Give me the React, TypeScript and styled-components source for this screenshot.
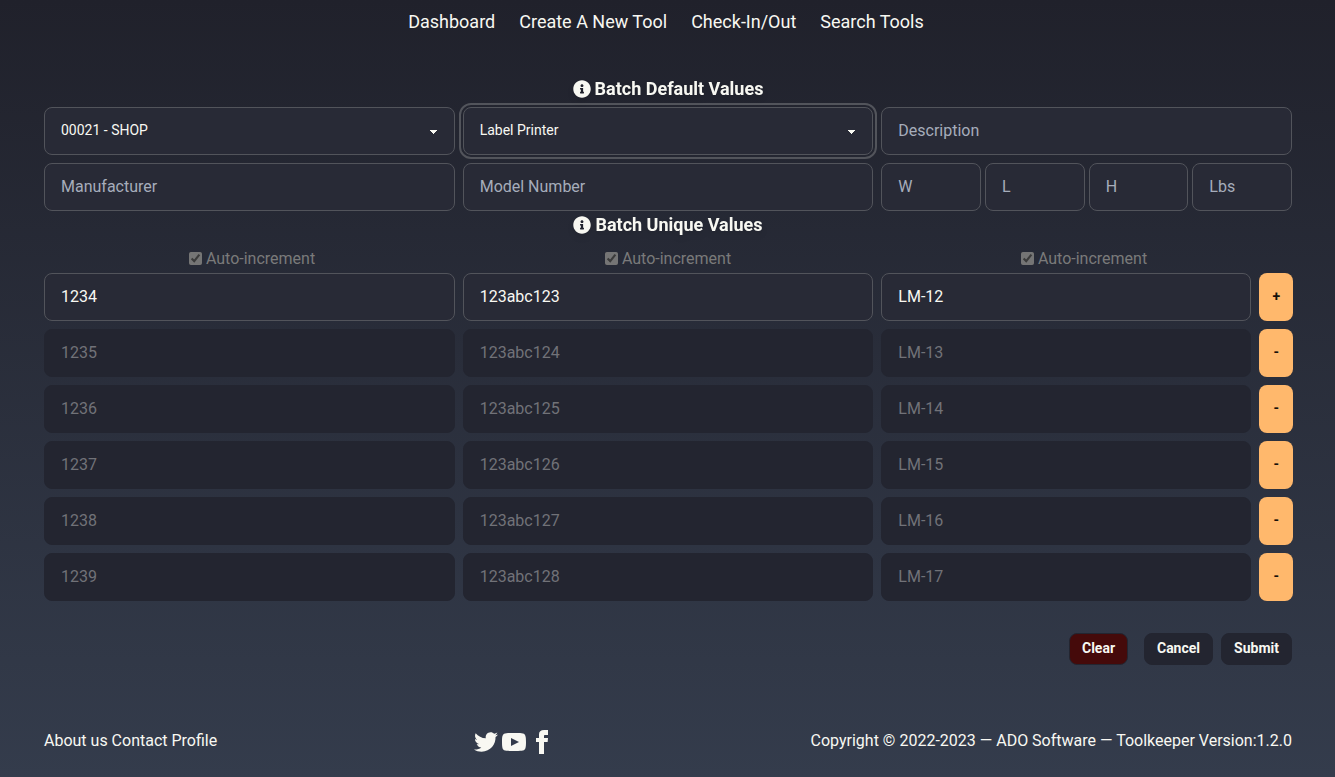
import React from 'react';
import styled, { createGlobalStyle, css } from 'styled-components';
import { FaInfoCircle } from 'react-icons/fa';

const colors = {
  text: '#f8f8f2',
  field: '#282a36',
  fieldBorder: '#52545b',
  fieldDisabled: '#232530',
  placeholder: '#a6adbb',
  muted: '#7a7a7a',
  orange: '#ffb86c',
};

const GlobalStyle = createGlobalStyle`
  *, *::before, *::after { box-sizing: border-box; }
  html { color-scheme: dark; }
  body {
    margin: 0;
    font-family: Roboto, "Liberation Sans", sans-serif;
    font-size: 16px;
    line-height: 24px;
    color: ${colors.text};
  }
  input, select, button { font-family: inherit; margin: 0; }
`;

const Page = styled.div`
  display: flex;
  flex-direction: column;
  height: 777px;
  overflow: hidden;
  background: linear-gradient(#20212b, #343c4c);
`;

const Nav = styled.nav`
  display: flex;
  justify-content: center;
  gap: 24px;
  height: 44px;
  padding-right: 3px;
  align-items: center;
  font-size: 18px;
  line-height: 28px;
`;

const NavLink = styled.a`
  color: inherit;
  text-decoration: none;
`;

const Content = styled.main`
  width: 1248px;
  margin: 26px 0 0 44px;
`;

const Heading = styled.h1<{ $height: number }>`
  display: flex;
  align-items: center;
  justify-content: center;
  gap: 4px;
  height: ${(p) => p.$height}px;
  margin: 0;
  font-size: 18px;
  font-weight: 700;
  line-height: 28px;
  filter: drop-shadow(0 4px 3px rgba(0, 0, 0, 0.07)) drop-shadow(0 2px 2px rgba(0, 0, 0, 0.06));
`;

const DefaultsGrid = styled.div`
  display: grid;
  grid-template-columns: repeat(3, 1fr);
  gap: 8px;
`;

const Dimensions = styled.div`
  display: grid;
  grid-template-columns: repeat(4, 1fr);
  gap: 4px;
`;

const fieldBox = css`
  display: block;
  width: 100%;
  min-width: 0;
  height: 48px;
  padding: 0 16px 2px;
  border: 1px solid ${colors.fieldBorder};
  border-radius: 8px;
  background-color: ${colors.field};
  color: ${colors.text};
  outline: none;
`;

const Field = styled.input`
  ${fieldBox}
  font-size: 16px;
  line-height: 24px;
  &::placeholder { color: ${colors.placeholder}; opacity: 1; }
  &:disabled {
    border-color: ${colors.fieldDisabled};
    background-color: ${colors.fieldDisabled};
    color: #717278;
  }
`;

const Select = styled.select<{ $active?: boolean }>`
  ${fieldBox}
  appearance: none;
  font-size: 14px;
  line-height: 28px;
  background-image:
    linear-gradient(45deg, transparent 50%, currentColor 50%),
    linear-gradient(135deg, currentColor 50%, transparent 50%);
  background-position: calc(100% - 20px) calc(1px + 50%), calc(100% - 16px) calc(1px + 50%);
  background-size: 4px 4px, 4px 4px;
  background-repeat: no-repeat;
  ${(p) => p.$active && css`
    outline: 2px solid ${colors.fieldBorder};
    outline-offset: 2px;
  `}
`;

const IncrementRow = styled.div`
  display: grid;
  grid-template-columns: repeat(3, 1fr);
  height: 34px;
  padding-top: 8px;
`;

const IncrementLabel = styled.label`
  display: flex;
  justify-content: center;
  align-items: center;
  gap: 4px;
  height: 24px;
  color: ${colors.muted};
  input { width: 13px; height: 13px; position: relative; top: -1px; }
`;

const Rows = styled.div`
  display: flex;
  flex-direction: column;
  gap: 8px;
`;

const Row = styled.div`
  display: grid;
  grid-template-columns: 410.67px 410.67px 370px 34px;
  column-gap: 8px;
`;

const RowButton = styled.button`
  height: 48px;
  padding: 0 0 2px;
  border: 0;
  border-radius: 8px;
  background: ${colors.orange};
  color: #16100a;
  font-size: 14px;
  font-weight: 700;
`;

const Actions = styled.div`
  display: flex;
  justify-content: flex-end;
  margin-top: 32px;
  gap: 8px;
`;

const ActionButton = styled.button<{ $danger?: boolean; $width: number }>`
  width: ${(p) => p.$width}px;
  height: 32px;
  padding: 0 0 2px;
  margin-right: ${(p) => (p.$danger ? 8 : 0)}px;
  border: 1px solid ${colors.fieldDisabled};
  border-radius: 8px;
  background: ${(p) => (p.$danger ? '#450a0a' : colors.fieldDisabled)};
  color: ${colors.text};
  font-size: 14px;
  font-weight: 700;
`;

const Footer = styled.footer`
  display: flex;
  justify-content: space-between;
  align-items: center;
  width: 1248px;
  height: 24px;
  margin: 65px 0 0 44px;
`;

const FooterText = styled.div`
  padding-bottom: 3px;
`;

const Social = styled.div`
  display: flex;
  gap: 4px;
  width: 80px;
  svg { display: block; width: 24px; height: 24px; fill: ${colors.text}; }
`;

const ROWS = [0, 1, 2, 3, 4, 5].map((n) => ({
  serial: String(1234 + n),
  barcode: `123abc${123 + n}`,
  tool: `LM-${12 + n}`,
}));

const SOCIAL_PATHS = [
  'M24 4.557c-.883.392-1.832.656-2.828.775 1.017-.609 1.798-1.574 2.165-2.724-.951.564-2.005.974-3.127 1.195-.897-.957-2.178-1.555-3.594-1.555-3.179 0-5.515 2.966-4.797 6.045-4.091-.205-7.719-2.165-10.148-5.144-1.29 2.213-.669 5.108 1.523 6.574-.806-.026-1.566-.247-2.229-.616-.054 2.281 1.581 4.415 3.949 4.89-.693.188-1.452.232-2.224.084.626 1.956 2.444 3.379 4.6 3.419-2.07 1.623-4.678 2.348-7.29 2.04 2.179 1.397 4.768 2.212 7.548 2.212 9.142 0 14.307-7.721 13.995-14.646.962-.695 1.797-1.562 2.457-2.549z',
  'M19.615 3.184c-3.604-.246-11.631-.245-15.23 0-3.897.266-4.356 2.62-4.385 8.816.029 6.185.484 8.549 4.385 8.816 3.6.245 11.626.246 15.23 0 3.897-.266 4.356-2.62 4.385-8.816-.029-6.185-.484-8.549-4.385-8.816zm-10.615 12.816v-8l8 3.993-8 4.007z',
  'M9 8h-3v4h3v12h5v-12h3.642l.358-4h-4v-1.667c0-.955.192-1.333 1.115-1.333h2.885v-5h-3.808c-3.596 0-5.192 1.583-5.192 4.615v3.385z',
];

export default function App() {
  return (
    <Page>
      <GlobalStyle />
      <Nav>
        <NavLink>Dashboard</NavLink>
        <NavLink>Create A New Tool</NavLink>
        <NavLink>Check-In/Out</NavLink>
        <NavLink>Search Tools</NavLink>
      </Nav>
      <Content>
        <Heading $height={37}>
          <FaInfoCircle />
          <span>Batch Default Values</span>
        </Heading>
        <DefaultsGrid>
          <Select defaultValue="shop"><option value="shop">00021 - SHOP</option></Select>
          <Select $active defaultValue="label"><option value="label">Label Printer</option></Select>
          <Field placeholder="Description" />
          <Field placeholder="Manufacturer" />
          <Field placeholder="Model Number" />
          <Dimensions>
            <Field placeholder="W" />
            <Field placeholder="L" />
            <Field placeholder="H" />
            <Field placeholder="Lbs" />
          </Dimensions>
        </DefaultsGrid>
        <Heading $height={28}>
          <FaInfoCircle />
          <span>Batch Unique Values</span>
        </Heading>
        <IncrementRow>
          {['serial', 'barcode', 'tool'].map((name) => (
            <IncrementLabel key={name}>
              <input type="checkbox" checked disabled readOnly />
              <span>Auto-increment</span>
            </IncrementLabel>
          ))}
        </IncrementRow>
        <Rows>
          {ROWS.map((row, i) => (
            <Row key={row.serial}>
              <Field defaultValue={row.serial} disabled={i > 0} />
              <Field defaultValue={row.barcode} disabled={i > 0} />
              <Field defaultValue={row.tool} disabled={i > 0} />
              <RowButton>{i === 0 ? '+' : '-'}</RowButton>
            </Row>
          ))}
        </Rows>
        <Actions>
          <ActionButton $danger $width={59}>Clear</ActionButton>
          <ActionButton $width={69}>Cancel</ActionButton>
          <ActionButton $width={71}>Submit</ActionButton>
        </Actions>
      </Content>
      <Footer>
        <FooterText>About us Contact Profile</FooterText>
        <Social>
          {SOCIAL_PATHS.map((d) => (
            <svg key={d} viewBox="0 0 24 24"><path d={d} /></svg>
          ))}
        </Social>
        <FooterText>Copyright © 2022-2023 — ADO Software — Toolkeeper Version:1.2.0</FooterText>
      </Footer>
    </Page>
  );
}
